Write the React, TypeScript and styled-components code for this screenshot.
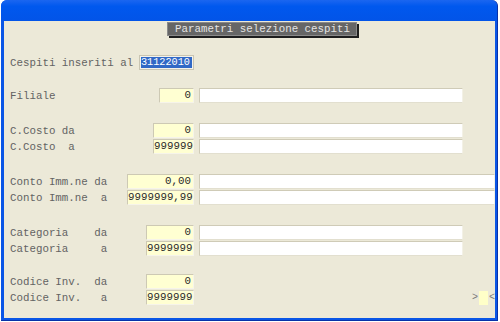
import React from "react";
import styled, { createGlobalStyle } from "styled-components";

const Global = createGlobalStyle`
  html, body { margin: 0; padding: 0; background: #ffffff; }
  body { width: 500px; height: 322px; overflow: hidden; }
`;

const Window = styled.div`
  box-sizing: border-box;
  margin-left: 1px;
  width: 497px;
  height: 321px;
  display: flex;
  flex-direction: column;
  background: #0a56e6;
  border-radius: 6px 6px 0 0;
  border-right: 1px solid #0831a8;
  border-bottom: 1px solid #0831a8;
  font-family: "Liberation Mono", "Courier New", monospace;
  font-size: 10.8px;
`;

const TitleBar = styled.div`
  height: 21px;
  flex: none;
  background: linear-gradient(#1b66f0, #0058ee 30%, #0254e8);
  border-radius: 6px 6px 0 0;
`;

const Content = styled.div`
  flex: 1;
  margin: 0 2px 2px 3px;
  background: #ece9d8;
  display: flex;
  flex-direction: column;
  padding: 1px 0 0 6px;
`;

const Caption = styled.div`
  align-self: flex-start;
  margin-left: 157px;
  height: 12px;
  line-height: 12px;
  padding: 0 6px 0 7px;
  background: #666666;
  color: #e4e4e4;
  border: 1px solid #8a8a8a;
  box-shadow: 2px 2px 0 #1e1e1e;
  white-space: pre;
`;

const Form = styled.div`
  display: flex;
  flex-direction: column;
  margin-top: 19px;
`;

const Group = styled.div<{ $top: number }>`
  display: flex;
  flex-direction: column;
  gap: 1px;
  margin-top: ${(p) => p.$top}px;
`;

const Row = styled.div`
  display: flex;
  align-items: center;
  height: 15px;
`;

const LabelCell = styled.div`
  width: 184px;
  display: flex;
  align-items: center;
  justify-content: space-between;
  flex: none;
`;

const Label = styled.span`
  color: #636363;
  white-space: pre;
`;

const Field = styled.div<{ $w: number }>`
  box-sizing: border-box;
  width: ${(p) => p.$w}px;
  height: 15px;
  line-height: 13px;
  padding-right: 2px;
  text-align: right;
  background: #ffffd2;
  color: #2a2a2a;
  border: 1px solid;
  border-color: #cdc9b4 #f6f4ea #f6f4ea #cdc9b4;
`;

const DateField = styled.div`
  box-sizing: border-box;
  width: 55px;
  height: 15px;
  padding: 1px;
  background: #f4f2ea;
  border: 1px solid #c9c5b2;
`;

const Highlight = styled.div`
  height: 100%;
  line-height: 11px;
  background: #3169c6;
  color: #ffffff;
  font-size: 10.2px;
  overflow: hidden;
`;

const Desc = styled.div<{ $wide?: boolean }>`
  box-sizing: border-box;
  margin-left: 5px;
  width: ${(p) => (p.$wide ? 296 : 264)}px;
  height: 15px;
  background: #ffffff;
  border: 1px solid;
  border-color: #cfcbb7 #f3f1e6 #e2dfcf #cfcbb7;
`;

const Marker = styled.div`
  margin-left: auto;
  margin-right: 0;
  display: flex;
  align-items: center;
  gap: 1px;
  color: #7a7a7a;
  font-size: 10px;
`;

const MiniField = styled.div`
  width: 9px;
  height: 14px;
  background: #ffffc8;
`;

type Pair = { label: string; w: number; value: string; desc?: boolean; wide?: boolean };

const groups: { top: number; rows: Pair[] }[] = [
  { top: 18, rows: [{ label: "Filiale", w: 35, value: "0", desc: true }] },
  {
    top: 20,
    rows: [
      { label: "C.Costo da", w: 41, value: "0", desc: true },
      { label: "C.Costo  a", w: 41, value: "999999", desc: true },
    ],
  },
  {
    top: 20,
    rows: [
      { label: "Conto Imm.ne da", w: 67, value: "0,00", desc: true, wide: true },
      { label: "Conto Imm.ne  a", w: 67, value: "9999999,99", desc: true, wide: true },
    ],
  },
  {
    top: 20,
    rows: [
      { label: "Categoria    da", w: 48, value: "0", desc: true },
      { label: "Categoria     a", w: 48, value: "9999999", desc: true },
    ],
  },
  {
    top: 18,
    rows: [
      { label: "Codice Inv.  da", w: 48, value: "0" },
      { label: "Codice Inv.   a", w: 48, value: "9999999" },
    ],
  },
];

export default function App() {
  return (
    <>
      <Global />
      <Window>
        <TitleBar />
        <Content>
          <Caption>Parametri selezione cespiti</Caption>
          <Form>
            <Row>
              <LabelCell>
                <Label>Cespiti inseriti al</Label>
                <DateField>
                  <Highlight>31122010</Highlight>
                </DateField>
              </LabelCell>
            </Row>
            {groups.map((g, gi) => (
              <Group key={gi} $top={g.top}>
                {g.rows.map((r, ri) => (
                  <Row key={ri}>
                    <LabelCell>
                      <Label>{r.label}</Label>
                      <Field $w={r.w}>{r.value}</Field>
                    </LabelCell>
                    {r.desc && <Desc $wide={r.wide} />}
                    {gi === groups.length - 1 && ri === 1 && (
                      <Marker>
                        <span>&gt;</span>
                        <MiniField />
                        <span>&lt;</span>
                      </Marker>
                    )}
                  </Row>
                ))}
              </Group>
            ))}
          </Form>
        </Content>
      </Window>
    </>
  );
}
